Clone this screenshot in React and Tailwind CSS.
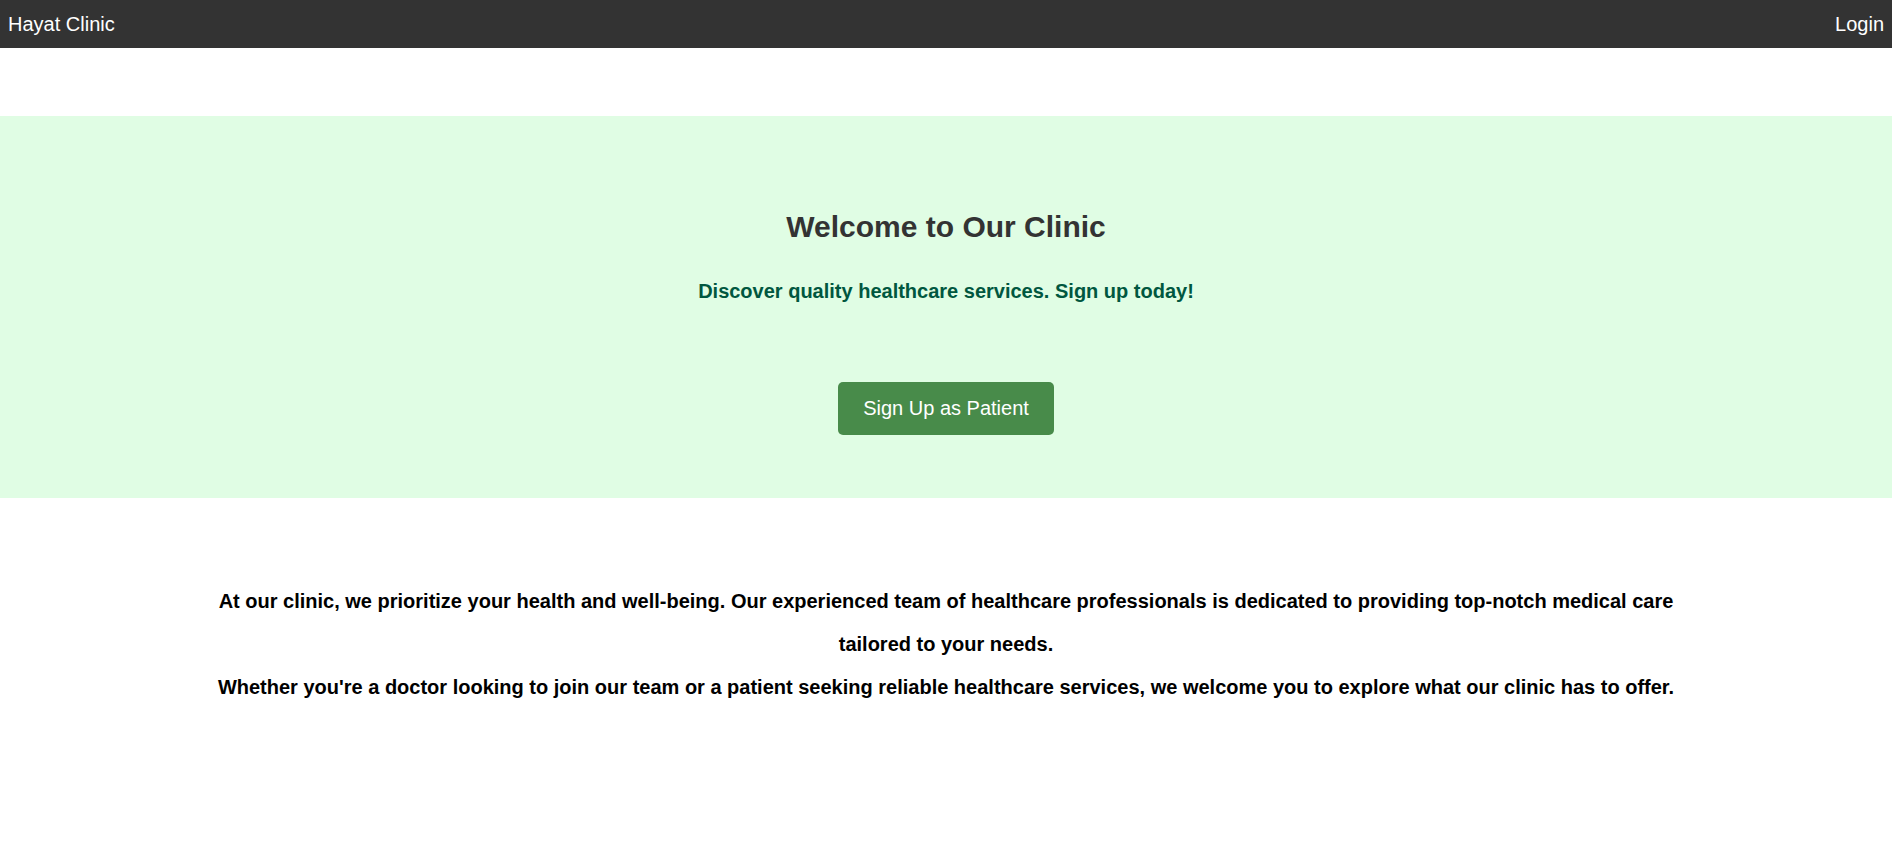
import React from "react";

function Navbar() {
  return (
    <nav className="flex h-[48px] items-center justify-between bg-[#333333] px-[8px] text-[20px] text-white">
      <a href="#" className="leading-[normal]">Hayat Clinic</a>
      <a href="#" className="leading-[normal]">Login</a>
    </nav>
  );
}

function Hero() {
  return (
    <section className="mt-[68px] flex flex-col items-center bg-[#e0fde4] pt-[94px] pb-[63px] text-center">
      <h1 className="text-[30px] font-bold leading-[normal] text-[#333333]">
        Welcome to Our Clinic
      </h1>
      <p className="mt-[36px] text-[20px] font-bold leading-[normal] text-[#00573f]">
        Discover quality healthcare services. Sign up today!
      </p>
      <button className="mt-[79px] rounded-[5px] bg-[#488b4a] px-[25px] py-[15px] text-[20px] leading-[normal] text-white">
        Sign Up as Patient
      </button>
    </section>
  );
}

function About() {
  return (
    <div className="mx-auto mt-[82px] max-w-[1500px] text-center text-[20px] font-bold leading-[43px] text-black">
      <p>
        At our clinic, we prioritize your health and well-being. Our experienced team of healthcare
        professionals is dedicated to providing top-notch medical care tailored to your needs.
      </p>
      <p>
        Whether you're a doctor looking to join our team or a patient seeking reliable healthcare
        services, we welcome you to explore what our clinic has to offer.
      </p>
    </div>
  );
}

export default function App() {
  return (
    <div className="min-h-screen bg-white font-['Liberation_Sans',Arial,sans-serif]">
      <Navbar />
      <Hero />
      <About />
    </div>
  );
}
